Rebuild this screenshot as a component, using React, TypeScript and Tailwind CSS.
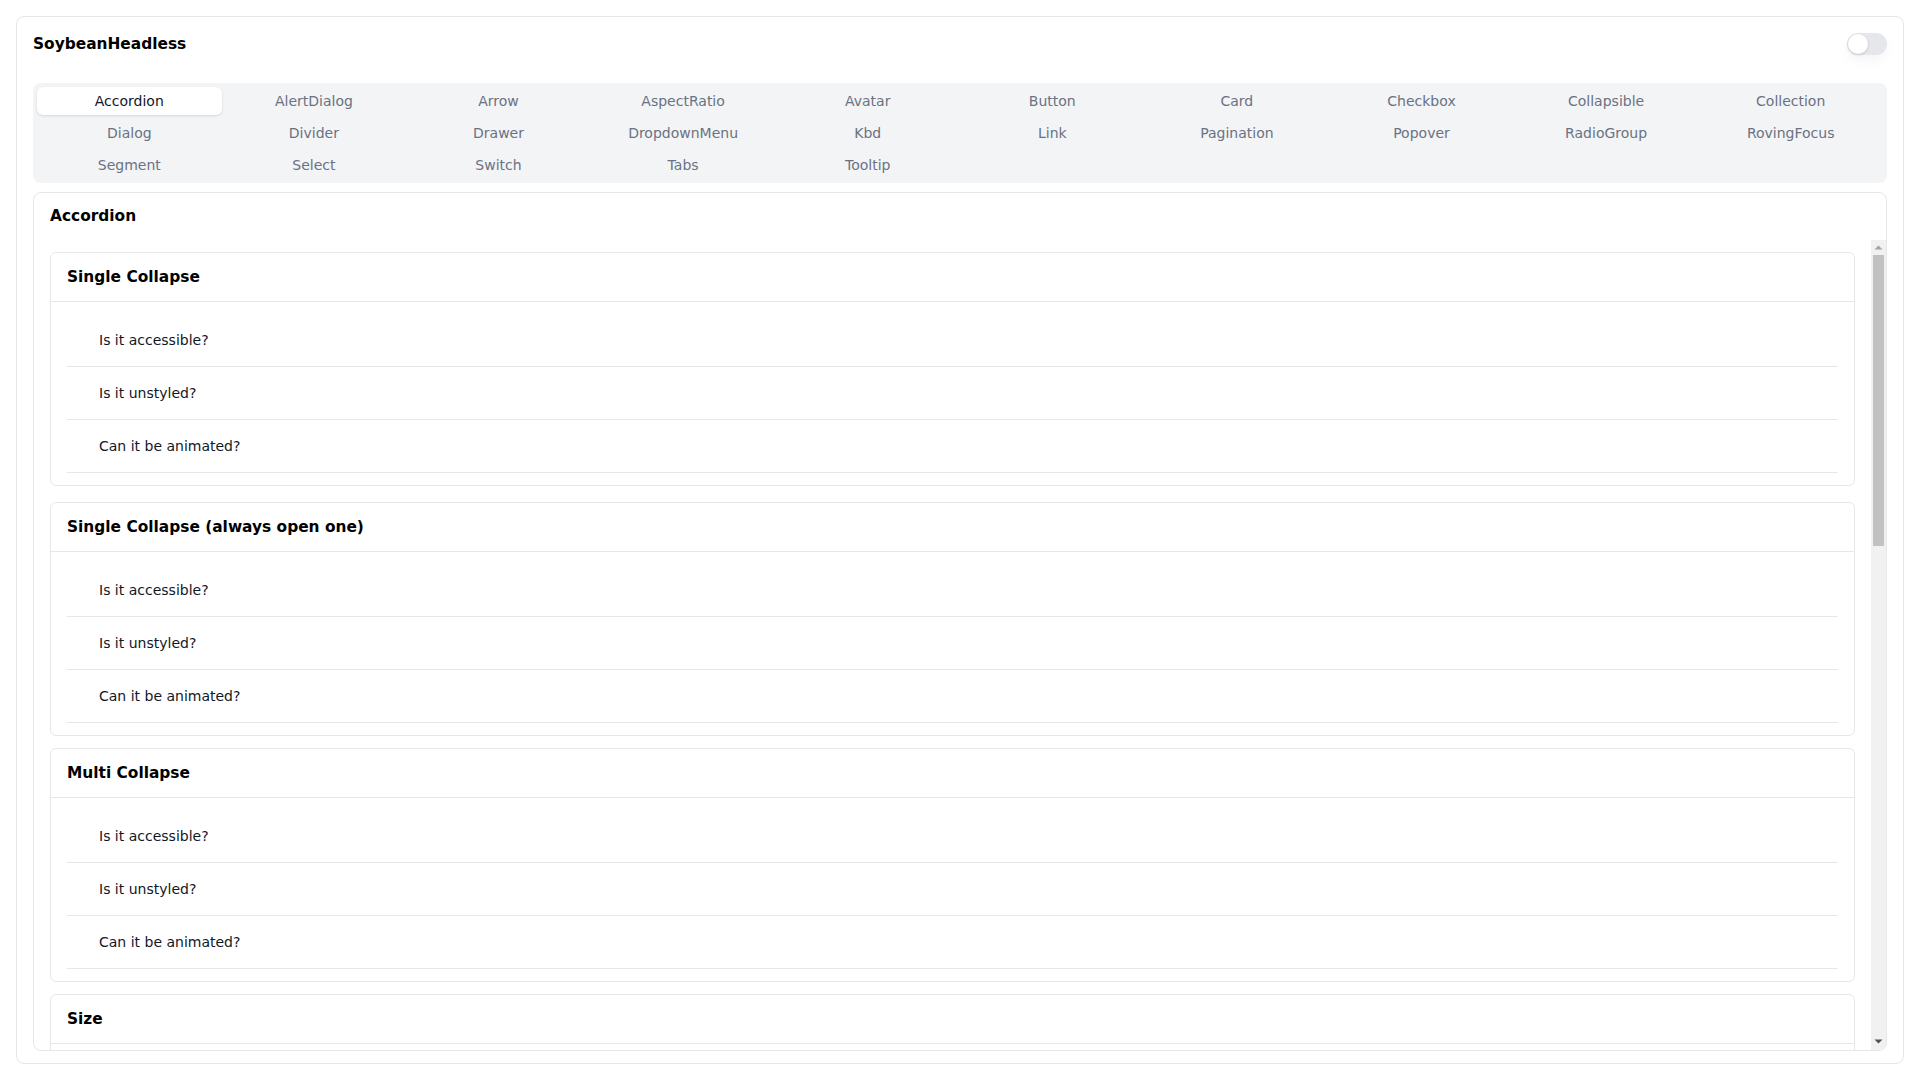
import { useState } from 'react';

const tabs = [
  'Accordion', 'AlertDialog', 'Arrow', 'AspectRatio', 'Avatar', 'Button', 'Card', 'Checkbox', 'Collapsible', 'Collection',
  'Dialog', 'Divider', 'Drawer', 'DropdownMenu', 'Kbd', 'Link', 'Pagination', 'Popover', 'RadioGroup', 'RovingFocus',
  'Segment', 'Select', 'Switch', 'Tabs', 'Tooltip',
];

const questions = ['Is it accessible?', 'Is it unstyled?', 'Can it be animated?'];

function Items({ size = 'md' }: { size?: 'sm' | 'md' | 'lg' }) {
  const itemClass =
    size === 'sm' ? 'py-3 pl-8 text-xs leading-4' : size === 'lg' ? 'py-5 pl-8 text-base leading-6' : 'py-4 pl-8 text-sm leading-5';
  return (
    <div>
      {questions.map((q) => (
        <button key={q} className={`block w-full border-b border-gray-200 text-left text-gray-900 ${itemClass}`}>
          {q}
        </button>
      ))}
    </div>
  );
}

function Section({ title, className = '', children }: { title: string; className?: string; children?: React.ReactNode }) {
  return (
    <div className={`rounded-md border border-gray-200 ${className}`}>
      <div className="border-b border-gray-200 px-4 py-3 text-[15.4px] font-bold leading-6 text-black">{title}</div>
      <div className="px-4 py-3">{children ?? <Items />}</div>
    </div>
  );
}

// classic scrollbar: arrow buttons, grey thumb
function ScrollTrack() {
  return (
    <div className="flex w-[15px] shrink-0 flex-col bg-[#f1f1f1]">
      <svg width="15" height="15" viewBox="0 0 15 15" className="shrink-0">
        <path d="M3.5 9.5 L7.5 5.5 L11.5 9.5 Z" fill="#a3a3a3" />
      </svg>
      <div className="min-h-0 flex-1">
        <div className="mx-[2px] h-[291px] bg-[#c1c1c1]" />
      </div>
      <svg width="15" height="15" viewBox="0 0 15 15" className="shrink-0">
        <path d="M3.5 4.5 L11.5 4.5 L7.5 8.5 Z" fill="#505050" />
      </svg>
    </div>
  );
}

export default function App() {
  const [active, setActive] = useState('Accordion');
  const [dark, setDark] = useState(false);

  return (
    <div className="h-screen bg-white p-4 font-['DejaVu_Sans',sans-serif]">
      <div className="flex h-full flex-col rounded-lg border border-gray-200 px-4 pt-4 pb-3">
        {/* Header */}
        <div className="flex h-[22px] items-center justify-between">
          <h1 className="text-[15.4px] font-bold leading-6 text-black">SoybeanHeadless</h1>
          <button
            onClick={() => setDark(!dark)}
            className="relative h-[22px] w-10 rounded-full bg-gray-200 shadow-[0_6px_12px_rgba(0,0,0,0.04)]"
          >
            <span className="absolute top-px left-px size-5 rounded-full bg-white shadow-[0_1px_3px_rgba(0,0,0,0.15)]" />
          </button>
        </div>

        {/* Tabs */}
        <div className="mt-7 grid grid-cols-10 gap-y-1 rounded-lg bg-gray-100 p-1">
          {tabs.map((tab) => (
            <button
              key={tab}
              onClick={() => setActive(tab)}
              className={
                tab === active
                  ? 'h-7 rounded-md bg-white text-sm text-gray-900 shadow-sm'
                  : 'h-7 rounded-md text-sm text-gray-500'
              }
            >
              {tab}
            </button>
          ))}
        </div>

        {/* Content */}
        <div className="mt-[9px] flex min-h-0 flex-1 flex-col overflow-hidden rounded-lg border border-gray-200">
          <div className="px-4 pt-[11px] pb-[12px] text-[15.4px] font-bold leading-6 text-black">{active}</div>
          <div className="flex min-h-0 flex-1">
            <div className="min-h-0 flex-1 overflow-y-auto px-4 pt-3 pb-3 [scrollbar-width:none]">
              <Section title="Single Collapse" />
              <Section title="Single Collapse (always open one)" className="mt-4" />
              <Section title="Multi Collapse" className="mt-3" />
              <Section title="Size" className="mt-3">
                <div className="flex flex-col gap-[26px]">
                  <Items size="sm" />
                  <Items size="lg" />
                </div>
              </Section>
              <Section title="Disabled" className="mt-3" />
              <Section title="Orientation" className="mt-3" />
              <Section title="Custom Trigger" className="mt-3" />
              <Section title="Loop Focus" className="mt-3" />
            </div>
            <ScrollTrack />
          </div>
        </div>
      </div>
    </div>
  );
}
